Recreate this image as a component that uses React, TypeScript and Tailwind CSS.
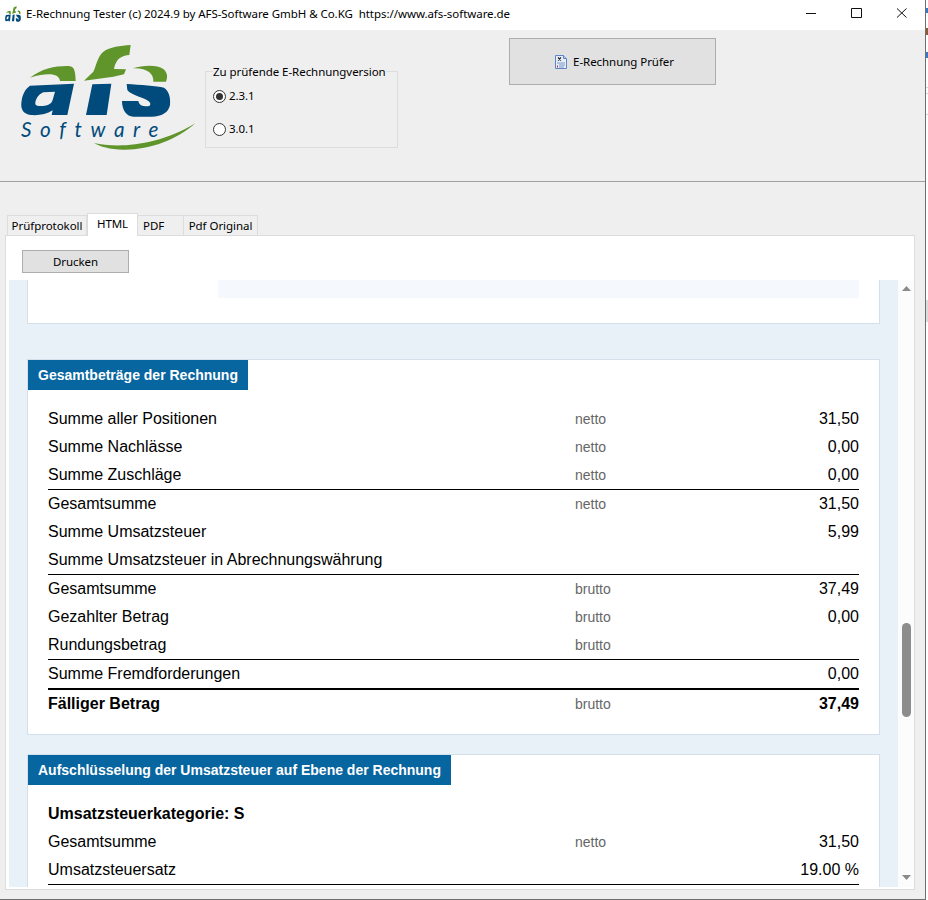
const ui = "font-['Noto_Sans',sans-serif]";

function Logo({ small }: { small?: boolean }) {
  return (
    <svg
      viewBox={small ? "30 28 455 222" : "0 0 585 375"}
      preserveAspectRatio={small ? "none" : undefined}
      className={small ? "w-[16px] h-[16px]" : "w-[195px] h-[125px]"}
    >
      <g fill="#5f952b">
        <path d="M222 137L250 110C258 95 262 65 280 50C300 36 330 32 362 30L358 60C335 62 318 70 312 102L348 103L342 118L310 125Z" />
        <path d="M60 128C95 100 140 92 175 93C190 94 196 100 197 138L150 138C148 118 120 110 60 128Z" />
        <path d="M368 100C400 90 440 88 460 102C472 112 474 125 468 140L430 140C432 115 410 98 368 100Z" />
      </g>
      <g fill="#004a7c">
        <path fillRule="evenodd" d="M60 152L192 146L172 240L125 240L128 226C110 238 85 242 62 240C40 238 32 222 34 205C36 180 45 162 60 152ZM100 172C85 178 75 195 76 207C77 214 90 214 105 212C118 210 125 205 128 195L135 170Z" />
        <path d="M247 148L304 146L290 240L228 240Z" />
        <path d="M350 147C390 150 440 152 462 158C478 168 482 190 480 210C476 232 455 245 425 245L370 245C350 245 336 225 336 198L385 198C388 210 395 214 412 214C420 214 424 208 418 200C405 188 360 180 352 165Z" />
      </g>
      {!small && (
        <>
          <text x="33" y="307" fill="#004a7c" fontSize="62" fontStyle="italic" fontFamily="Lato, sans-serif" fontWeight="400" textLength="412" lengthAdjust="spacing">Software</text>
          <path fill="#5f952b" d="M252 324C320 340 440 335 556 265C500 315 420 345 340 344C300 343 270 335 252 324Z" />
        </>
      )}
    </svg>
  );
}

function Radio({ label, checked }: { label: string; checked?: boolean }) {
  return (
    <div className="flex items-center gap-[3px] h-[16px]">
      <span className="w-[13px] h-[13px] rounded-full border border-[#333333] bg-white flex items-center justify-center">
        {checked && <span className="w-[7px] h-[7px] rounded-full bg-[#333333]" />}
      </span>
      <span>{label}</span>
    </div>
  );
}

function FileIcon() {
  return (
    <svg viewBox="0 0 12 14" className="w-[12px] h-[14px]">
      <path d="M.5.5H8.5L11.5 3.5V13.5H.5Z" fill="#e6eefa" stroke="#5f86c4" />
      <path d="M8.5.5V3.5H11.5" fill="#b9cdec" stroke="#5f86c4" />
      <path d="M3 2.5L6 5.5M6 2.5L3 5.5" stroke="#222222" strokeWidth="1.1" />
      <path d="M2 8H10M4 10H10M4 12H9" stroke="#6d8fc0" strokeWidth=".9" />
      <path d="M2 10.5H3V12.5H2Z" fill="#b03040" />
    </svg>
  );
}

function Row({ label, tag, value, bold, line }: { label: string; tag?: string; value?: string; bold?: boolean; line?: "thin" | "thick" }) {
  return (
    <div className={`flex items-center text-[16px] text-black ${bold ? "font-bold" : ""} ${line === "thin" ? "border-t border-black h-[29px]" : line === "thick" ? "border-t-2 border-black h-[30px]" : "h-[28px]"}`}>
      <span className="w-[527px]">{label}</span>
      <span className="text-[14px] font-normal text-[#666666]">{tag}</span>
      <span className="ml-auto">{value}</span>
    </div>
  );
}

export default function App() {
  return (
    <div className={`${ui} w-[928px] h-[900px] overflow-hidden bg-white flex text-[11.5px] tracking-[-0.05px] leading-none text-black`}>
      <div className="w-[926px] h-[900px] shrink-0 flex flex-col bg-[#efefef] border-r border-b border-[#6f6f6f]">
        {/* title bar */}
        <div className="h-[30px] bg-white flex items-center pl-[5px] pb-[2px] shrink-0">
          <Logo small />
          <span className="ml-[5px] whitespace-pre">E-Rechnung Tester (c) 2024.9 by AFS-Software GmbH &amp; Co.KG  https://www.afs-software.de</span>
          <svg viewBox="0 0 120 12" className="ml-auto mr-[18px] w-[120px] h-[12px]" fill="none" stroke="#111111">
            <path d="M19 5.5H29" />
            <path d="M64.5 .5H74.5V9.5H64.5Z" />
            <path d="M110 .5L119.5 9.5M119.5 .5L110 9.5" />
          </svg>
        </div>

        {/* header */}
        <div className="h-[152px] shrink-0 border-b border-[#a0a0a0] flex items-start">
          <div className="ml-[10px] mt-[5px]"><Logo /></div>
          <fieldset className="ml-0 mt-[34px] w-[193px] h-[84px] border border-[#dcdcdc] pl-[7px]">
            <legend className="px-0 h-[14px] translate-y-[2px]">Zu prüfende E-Rechnungversion</legend>
            <div className="mt-[10px] flex flex-col gap-[17px]">
              <Radio label="2.3.1" checked />
              <Radio label="3.0.1" />
            </div>
          </fieldset>
          <button className="ml-[111px] mt-[8px] w-[207px] h-[47px] bg-[#e1e1e1] border border-[#adadad] flex items-center justify-center gap-[6px] pl-[4px]">
            <FileIcon />
            <span>E-Rechnung Prüfer</span>
          </button>
        </div>

        {/* tabs */}
        <div className="h-[53px] shrink-0 flex items-end pl-[7px]">
          <div className="h-[20px] w-[80px] border border-b-0 border-[#dcdcdc] flex items-center justify-center">Prüfprotokoll</div>
          <div className="h-[23px] w-[51px] bg-white border border-b-0 border-[#dcdcdc] flex items-center justify-center -mb-[1px] relative pb-[3px]">HTML</div>
          <div className="h-[20px] w-[46px] border-r border-t border-[#dcdcdc] flex items-center pl-[5px]">PDF</div>
          <div className="h-[20px] w-[74px] border-r border-t border-[#dcdcdc] flex items-center justify-center">Pdf Original</div>
        </div>

        {/* tab page */}
        <div className="ml-[5px] w-[910px] h-[655px] shrink-0 bg-white border border-[#dcdcdc] flex flex-col">
          <div className="h-[44px] shrink-0 pl-[16px] pt-[14px]">
            <button className="w-[107px] h-[23px] bg-[#e1e1e1] border border-[#adadad]">Drucken</button>
          </div>
          <div className="flex ml-[3px] h-[607px] overflow-hidden">
            {/* html viewer */}
            <div className="w-[889px] bg-[#e8f0f8] px-[18px] font-['Liberation_Sans',sans-serif] tracking-normal overflow-hidden">
              <div className="h-[44px] bg-white border-r border-b border-l border-[#d3dfea] pl-[190px] pr-[20px]">
                <div className="h-[18px] bg-[#f5f9fd]" />
              </div>
              <div className="mt-[35px] h-[376px] bg-white border border-[#d3dfea]">
                <div className="inline-block h-[30px] w-[220px] bg-[#07659f] text-white text-[14px] font-bold leading-[30px] pl-[10px]">Gesamtbeträge der Rechnung</div>
                <div className="pl-[20px] pr-[20px] pt-[15px]">
                  <Row label="Summe aller Positionen" tag="netto" value="31,50" />
                  <Row label="Summe Nachlässe" tag="netto" value="0,00" />
                  <Row label="Summe Zuschläge" tag="netto" value="0,00" />
                  <Row label="Gesamtsumme" tag="netto" value="31,50" line="thin" />
                  <Row label="Summe Umsatzsteuer" value="5,99" />
                  <Row label="Summe Umsatzsteuer in Abrechnungswährung" />
                  <Row label="Gesamtsumme" tag="brutto" value="37,49" line="thin" />
                  <Row label="Gezahlter Betrag" tag="brutto" value="0,00" />
                  <Row label="Rundungsbetrag" tag="brutto" />
                  <Row label="Summe Fremdforderungen" value="0,00" line="thin" />
                  <Row label="Fälliger Betrag" tag="brutto" value="37,49" bold line="thick" />
                </div>
              </div>
              <div className="mt-[19px] h-[200px] bg-white border border-[#d3dfea]">
                <div className="inline-block h-[30px] w-[423px] bg-[#07659f] text-white text-[14px] font-bold leading-[30px] pl-[10px]">Aufschlüsselung der Umsatzsteuer auf Ebene der Rechnung</div>
                <div className="pl-[20px] pr-[20px] pt-[15px]">
                  <div className="h-[28px] flex items-center text-[16px] font-bold">Umsatzsteuerkategorie: S</div>
                  <Row label="Gesamtsumme" tag="netto" value="31,50" />
                  <Row label="Umsatzsteuersatz" value="19.00 %" />
                  <div className="border-t border-black" />
                </div>
              </div>
            </div>
            {/* scrollbar */}
            <div className="w-[16px] bg-[#fcfcfc] flex flex-col items-center">
              <svg viewBox="0 0 9 5" className="mt-[6px] w-[9px] h-[5px]"><path d="M4.5 0L9 5H0Z" fill="#8a8a8a" /></svg>
              <div className="mt-[332px] w-[9px] h-[94px] rounded-full bg-[#8d8d8d]" />
              <svg viewBox="0 0 9 5" className="mt-[158px] w-[9px] h-[5px]"><path d="M0 0H9L4.5 5Z" fill="#8a8a8a" /></svg>
            </div>
          </div>
        </div>
      </div>

      {/* sliver of the desktop behind the window */}
      <div className="w-[2px] flex flex-col">
        <div className="mt-[8px] h-[5px] bg-[#3b78c4]" />
        <div className="mt-[15px] h-[7px] bg-[#8a5a3c]" />
        <div className="mt-[17px] h-[6px] bg-[#3b78c4]" />
        <div className="mt-[29px] h-px bg-[#d8d8d8]" />
        <div className="mt-[5px] h-px bg-[#d8d8d8]" />
        <div className="mt-[20px] h-px bg-[#d8d8d8]" />
        <div className="mt-[185px] h-[22px] bg-[#dcdcdc]" />
      </div>
    </div>
  );
}
